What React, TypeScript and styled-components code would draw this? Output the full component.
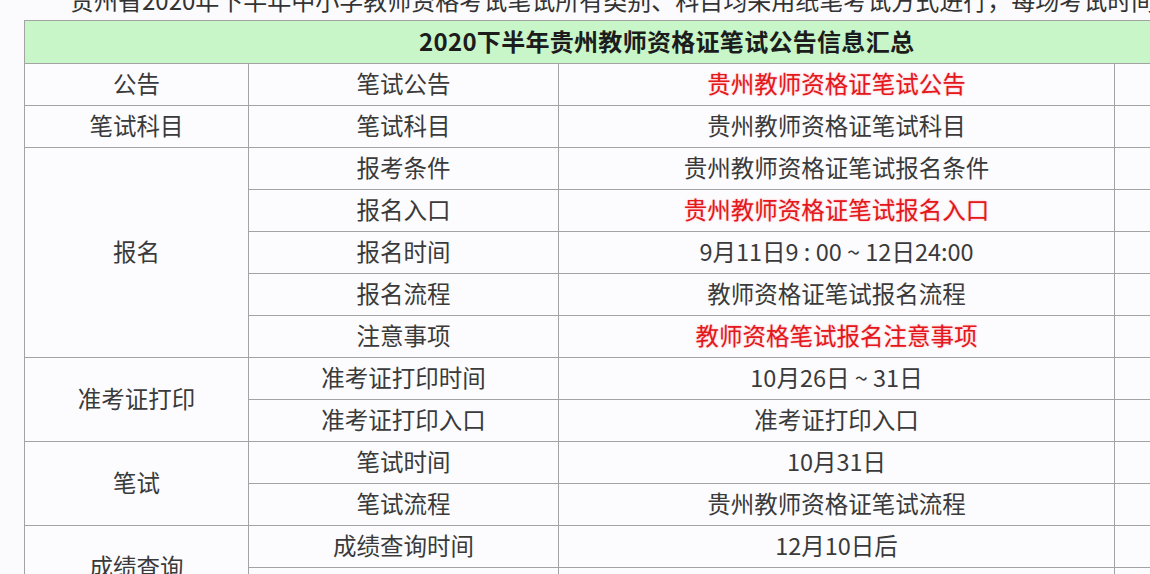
import React from "react";
import styled, { createGlobalStyle } from "styled-components";

const GlobalStyle = createGlobalStyle`
  html, body {
    margin: 0;
    padding: 0;
    background: #fbfbfd;
    overflow: hidden;
  }
  body {
    font-family: "Noto Sans CJK SC", "Noto Sans", sans-serif;
    color: #333;
  }
`

type Row = {
  group?: string
  span?: number
  item: string
  detail: string
  red?: boolean
}

const rows: Row[] = [
  { group: '公告', span: 1, item: '笔试公告', detail: '贵州教师资格证笔试公告', red: true },
  { group: '笔试科目', span: 1, item: '笔试科目', detail: '贵州教师资格证笔试科目' },
  { group: '报名', span: 5, item: '报考条件', detail: '贵州教师资格证笔试报名条件' },
  { item: '报名入口', detail: '贵州教师资格证笔试报名入口', red: true },
  { item: '报名时间', detail: '9月11日9 : 00 ~ 12日24:00' },
  { item: '报名流程', detail: '教师资格证笔试报名流程' },
  { item: '注意事项', detail: '教师资格笔试报名注意事项', red: true },
  { group: '准考证打印', span: 2, item: '准考证打印时间', detail: '10月26日 ~ 31日' },
  { item: '准考证打印入口', detail: '准考证打印入口' },
  { group: '笔试', span: 2, item: '笔试时间', detail: '10月31日' },
  { item: '笔试流程', detail: '贵州教师资格证笔试流程' },
  { group: '成绩查询', span: 2, item: '成绩查询时间', detail: '12月10日后' },
  { item: '成绩查询入口', detail: '贵州教师资格证成绩查询入口' },
]

const App = () => {
  return (
    <>
      <GlobalStyle/>
      <Page>
        <Intro>贵州省2020年下半年中小学教师资格考试笔试所有类别、科目均采用纸笔考试方式进行，每场考试时间</Intro>
        <Table>
          <colgroup>
            <col style={{width: 224}}/>
            <col style={{width: 310}}/>
            <col style={{width: 556}}/>
            <col style={{width: 120}}/>
          </colgroup>
          <tbody>
            <tr>
              <HeadCell colSpan={4}>
                <HeadText>2020下半年贵州教师资格证笔试公告信息汇总</HeadText>
              </HeadCell>
            </tr>
            {rows.map((r, i) => (
              <tr key={i}>
                {r.group && <Cell rowSpan={r.span}>{r.group}</Cell>}
                <Cell>{r.item}</Cell>
                <Cell $red={r.red}>{r.detail}</Cell>
                <Cell/>
              </tr>
            ))}
          </tbody>
        </Table>
      </Page>
    </>
  )
}

const Page = styled.div`
  width: 1150px;
  height: 574px;
  overflow: hidden;
  padding-left: 24px;
  box-sizing: border-box;
`

const Intro = styled.p`
  margin: -13px 0 7px 46px;
  font-size: 24px;
  line-height: 26px;
  white-space: nowrap;
  color: #333;
`

const Table = styled.table`
  border-collapse: collapse;
  table-layout: fixed;
  width: 1210px;

  & td {
    border: 1px solid #a3a3a3;
  }
`

const HeadCell = styled.td`
  height: 43px;
  padding: 0 0 3px 394px;
  box-sizing: border-box;
  background: #c8f6c8;
  text-align: left;
`

const HeadText = styled.span`
  font-size: 24px;
  font-weight: 700;
  color: #1c1c1c;
  letter-spacing: 0.3px;
`

const Cell = styled.td<{ $red?: boolean }>`
  height: 42px;
  box-sizing: border-box;
  padding: 0 0 4px;
  text-align: center;
  vertical-align: middle;
  font-size: 23.5px;
  line-height: 28px;
  color: ${({ $red }) => $red ? '#e3171c' : '#3a3a3a'};
  text-shadow: ${({ $red }) => $red ? '0 0 2px rgba(255, 60, 60, 0.45)' : 'none'};
  background: #fcfcfe;
  white-space: nowrap;
`

export default App
